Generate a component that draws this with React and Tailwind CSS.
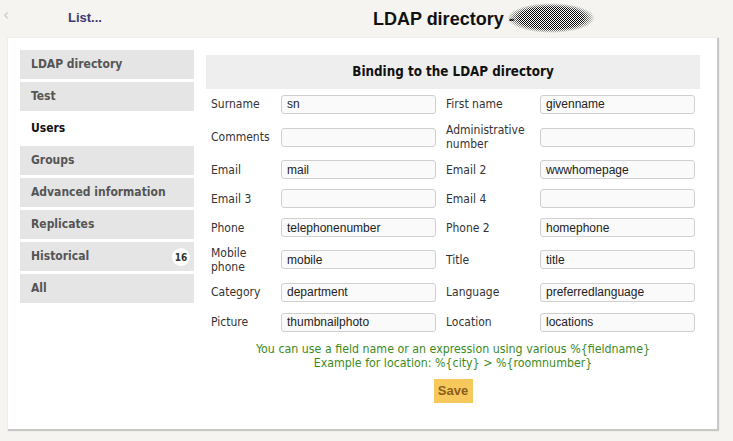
import React from 'react';

const menu = [
  { label: 'LDAP directory' },
  { label: 'Test' },
  { label: 'Users', active: true },
  { label: 'Groups' },
  { label: 'Advanced information' },
  { label: 'Replicates' },
  { label: 'Historical', badge: 16 },
  { label: 'All' },
];

const rows = [
  { l1: 'Surname', v1: 'sn', l2: 'First name', v2: 'givenname', h: 'h-[30px]' },
  { l1: 'Comments', v1: '', l2: 'Administrative number', v2: '', h: 'h-[36px]' },
  { l1: 'Email', v1: 'mail', l2: 'Email 2', v2: 'wwwhomepage', h: 'h-[29px]' },
  { l1: 'Email 3', v1: '', l2: 'Email 4', v2: '', h: 'h-[29px]' },
  { l1: 'Phone', v1: 'telephonenumber', l2: 'Phone 2', v2: 'homephone', h: 'h-[29px]' },
  { l1: 'Mobile phone', v1: 'mobile', l2: 'Title', v2: 'title', h: 'h-[35px]' },
  { l1: 'Category', v1: 'department', l2: 'Language', v2: 'preferredlanguage', h: 'h-[30px]' },
  { l1: 'Picture', v1: 'thumbnailphoto', l2: 'Location', v2: 'locations', h: 'h-[30px]' },
];

const labelFont = { fontFamily: '"DejaVu Sans Condensed", "DejaVu Sans", sans-serif' };

const Field = ({ value }) => (
  <input
    readOnly
    value={value}
    className="h-[19px] w-[155px] rounded-[3px] border border-[#d0d0d0] bg-[#fafafa] px-[5px] text-[12px] text-[#222] font-['Liberation_Sans',sans-serif] outline-none"
  />
);

const Blob = () => (
  <svg width="90" height="32" viewBox="0 0 90 32" className="ml-[-9px] mt-[2px]">
    <defs>
      <pattern id="chk" width="2" height="2" patternUnits="userSpaceOnUse">
        <rect width="2" height="2" fill="#fff" />
        <rect width="1" height="1" fill="#000" />
        <rect x="1" y="1" width="1" height="1" fill="#000" />
      </pattern>
      <radialGradient id="fade" cx="50%" cy="50%" r="50%">
        <stop offset="72%" stopColor="#fff" stopOpacity="1" />
        <stop offset="100%" stopColor="#fff" stopOpacity="0" />
      </radialGradient>
      <mask id="m">
        <ellipse cx="45" cy="16" rx="44" ry="15" fill="url(#fade)" />
      </mask>
    </defs>
    <rect width="90" height="32" fill="url(#chk)" mask="url(#m)" />
  </svg>
);

export default function App() {
  return (
    <div className="relative h-[441px] w-[733px] overflow-hidden bg-[#f5f4f0]">
      {/* top bar */}
      <div className="flex h-[38px] items-start">
        <span className="ml-[3px] mt-[8px] text-[15px] leading-none text-[#c8c8c8] font-['DejaVu_Sans',sans-serif]">‹</span>
        <span className="ml-[59px] mt-[11px] text-[13px] font-bold leading-none text-[#3b3b78] font-['Liberation_Sans_Narrow','Liberation_Sans',sans-serif]">
          List...
        </span>
        <span className="ml-[271px] mt-[10px] text-[18px] font-bold leading-none text-[#111] font-['Liberation_Sans_Narrow','Liberation_Sans',sans-serif]">
          LDAP directory -
        </span>
        <Blob />
      </div>

      {/* card */}
      <div className="ml-[8px] flex h-[391px] w-[709px] bg-white pl-[12px] pt-[12px] shadow-[1px_1px_1px_1px_rgba(0,0,0,0.18)]">
        {/* sidebar */}
        <div className="flex w-[174px] flex-col gap-[3px]" style={labelFont}>
          {menu.map((m) => (
            <div
              key={m.label}
              className={
                'relative flex h-[29px] items-center pl-[11px] pb-[2px] text-[12px] font-bold ' +
                (m.active ? 'bg-white text-[#111]' : 'bg-[#e5e5e5] text-[#555]')
              }
            >
              {m.label}
              {m.badge && (
                <span className="absolute right-[4px] top-[6px] flex h-[18px] w-[18px] items-center justify-center rounded-full bg-white text-[10px] font-bold text-[#333]">
                  {m.badge}
                </span>
              )}
            </div>
          ))}
        </div>

        {/* main */}
        <div className="ml-[12px] mt-[5px] w-[494px]">
          <div className="flex h-[34px] items-center justify-center bg-[#eeeeee] pb-[1px] text-[13.3px] font-bold text-[#111]" style={labelFont}>
            Binding to the LDAP directory
          </div>

          <div className="px-[5px]">
            {rows.map((r) => (
              <div key={r.l1} className={'flex items-center ' + r.h}>
                <div className="w-[70px] pr-[2px] text-[12px] leading-[14px] text-[#333]" style={labelFont}>
                  {r.l1}
                </div>
                <Field value={r.v1} />
                <div className="ml-[10px] w-[94px] pr-[8px] text-[12px] leading-[14px] text-[#333]" style={labelFont}>
                  {r.l2}
                </div>
                <Field value={r.v2} />
              </div>
            ))}
          </div>

          <div className="mt-[5px] text-center text-[12.3px] leading-[14px] text-[#3d8a1c]" style={labelFont}>
            <div>You can use a field name or an expression using various %{'{'}fieldname{'}'}</div>
            <div>Example for location: %{'{'}city{'}'} &gt; %{'{'}roomnumber{'}'}</div>
          </div>

          <div className="mt-[9px] flex justify-center">
            <button className="h-[24px] w-[39px] bg-[#f7c85c] text-[13px] font-bold text-[#8a5f1c] font-['Liberation_Sans_Narrow','Liberation_Sans',sans-serif]">
              Save
            </button>
          </div>
        </div>
      </div>
    </div>
  );
}
